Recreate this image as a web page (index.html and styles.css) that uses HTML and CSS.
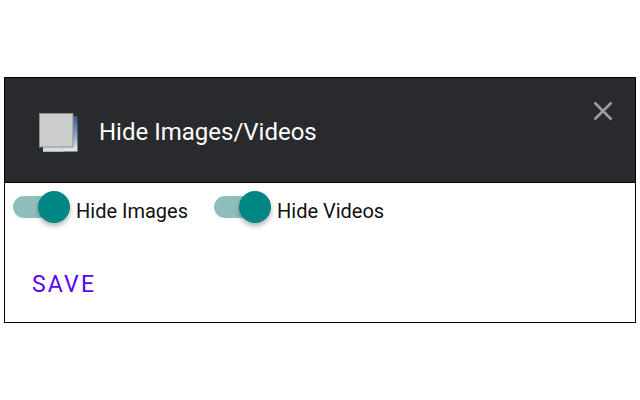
FILE: index.html
```html
<!DOCTYPE html>
<html lang="en">
<head>
<meta charset="utf-8">
<title>Hide Images/Videos</title>
<link rel="stylesheet" href="styles.css">
</head>
<body>
<main class="card">
  <header class="header">
    <svg class="logo" viewBox="0 0 39 39" width="39" height="39" aria-hidden="true">
      <defs>
        <linearGradient id="sky" x1="0" y1="0" x2="0" y2="1">
          <stop offset="0" stop-color="#3c5a90"/>
          <stop offset="0.5" stop-color="#7f9cc0"/>
          <stop offset="0.85" stop-color="#cfd8e2"/>
          <stop offset="1" stop-color="#e6eaee"/>
        </linearGradient>
      </defs>
      <rect x="4" y="3" width="34.5" height="35.5" fill="url(#sky)"/>
      <rect x="4" y="34" width="20" height="4.5" fill="#d3dde6"/>
      <rect x="0.5" y="0.5" width="33.5" height="33.5" fill="#cdcdcd" stroke="#8e8e8e" stroke-width="1"/>
    </svg>
    <h1 class="title">Hide Images/Videos</h1>
    <svg class="close" viewBox="0 0 20 20" width="20" height="20" aria-label="Close">
      <path d="M1.5 1.5 L18.5 18.5 M18.5 1.5 L1.5 18.5" stroke="#9b9da1" stroke-width="2.6" fill="none"/>
    </svg>
  </header>
  <section class="toggles">
    <label class="toggle first">
      <span class="switch"><span class="track"></span><span class="thumb"></span></span>
      <span class="label">Hide Images</span>
    </label>
    <label class="toggle">
      <span class="switch"><span class="track"></span><span class="thumb"></span></span>
      <span class="label">Hide Videos</span>
    </label>
  </section>
  <button class="save" type="button">SAVE</button>
</main>
</body>
</html>
```
FILE: styles.css
```css
* { box-sizing: border-box; }
html, body { margin: 0; height: 100%; background: #fff; }
body {
  display: flex;
  align-items: center;
  justify-content: center;
  font-family: Roboto, "Liberation Sans", sans-serif;
}
.card {
  width: 632px;
  height: 246px;
  border: 1px solid #000;
  background: #fff;
}
.header {
  position: relative;
  height: 105px;
  background: #292a2e;
  border-bottom: 1px solid #000;
  display: flex;
  align-items: center;
  padding: 5px 0 0 34px;
}
.logo { flex: none; }
.title {
  margin: 0 0 2px 21px;
  font-size: 24px;
  font-weight: 400;
  color: #fff;
  line-height: 28px;
}
.close { position: absolute; right: 22px; top: 23px; }
.toggles {
  display: flex;
  padding-top: 8px;
  padding-left: 8px;
  height: 88px;
}
.toggle { display: flex; align-items: flex-start; }
.toggle.first { margin-right: 26px; }
.switch {
  position: relative;
  display: block;
  width: 57px;
  height: 32px;
  flex: none;
}
.track {
  position: absolute;
  left: 0;
  top: 5px;
  width: 50px;
  height: 22px;
  border-radius: 11px;
  background: #8fbfbd;
}
.thumb {
  position: absolute;
  left: 25px;
  top: 0;
  width: 32px;
  height: 32px;
  border-radius: 50%;
  background: #008785;
  box-shadow: 0 3px 5px rgba(0, 0, 0, 0.3);
}
.label {
  margin-left: 6px;
  font-size: 20px;
  line-height: 24px;
  margin-top: 8px;
  color: #111;
}
.save {
  display: block;
  margin-left: 27px;
  padding: 0;
  border: 0;
  background: none;
  font-family: inherit;
  font-size: 23px;
  line-height: 28px;
  letter-spacing: 2.2px;
  color: #5b00f5;
}
```
